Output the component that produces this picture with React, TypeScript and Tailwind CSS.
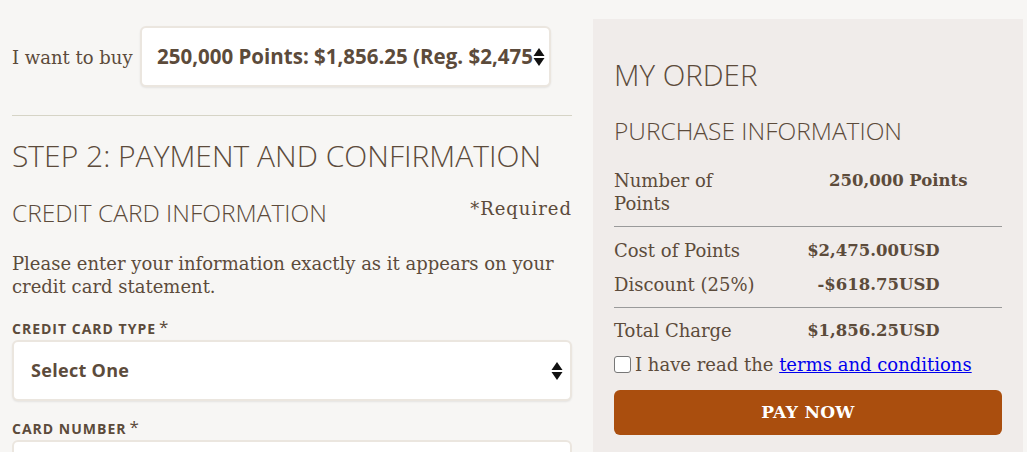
const serif = { fontFamily: '"DejaVu Serif", "Liberation Serif", serif' };

function Arrows() {
  return (
    <svg width="12" height="20" viewBox="0 0 12 20" className="shrink-0">
      <path d="M6 1 L11.5 9 L0.5 9 Z" fill="#111" />
      <path d="M6 19 L11.5 11 L0.5 11 Z" fill="#111" />
    </svg>
  );
}

export default function App() {
  return (
    <div className="w-[1027px] h-[452px] overflow-hidden bg-[#f7f6f4] text-[#5c4b3b] flex font-['Open_Sans',sans-serif]">
      {/* left column */}
      <div className="w-[560px] ml-[12px] shrink-0">
        <div className="flex items-center pt-[26px]">
          <span className="text-[18px] w-[128px] mt-[2px]" style={serif}>I want to buy</span>
          <div className="w-[411px] h-[61px] bg-white border-2 border-[#ebe6df] rounded-[6px] shadow-[0_1px_2px_rgba(0,0,0,0.08)] flex items-center pl-[15px] pr-[7px]">
            <span className="text-[20.5px] font-bold whitespace-nowrap flex-1">250,000 Points: $1,856.25 (Reg. $2,475</span>
            <Arrows />
          </div>
        </div>
        <div className="h-px bg-[#d6d4c6] mt-[28px]" />
        <h1 className="text-[30px] font-light leading-[36px] mt-[22px]">STEP 2: PAYMENT AND CONFIRMATION</h1>
        <div className="flex justify-between items-start mt-[24px]">
          <h2 className="text-[24.5px] font-light leading-[30px]">CREDIT CARD INFORMATION</h2>
          <span className="text-[18px] leading-[24px] -mt-[1px] tracking-[1px]" style={serif}>*Required</span>
        </div>
        <p className="text-[18px] leading-[23px] mt-[24px]" style={serif}>
          Please enter your information exactly as it appears on your credit card statement.
        </p>
        <div className="mt-[23px] text-[14px] font-bold tracking-[1px] leading-[16px] flex">
          CREDIT CARD TYPE<span className="ml-[3px] text-[17px] leading-[12px] font-normal">*</span>
        </div>
        <div className="mt-[3px] h-[61px] bg-white border-2 border-[#ebe6df] rounded-[6px] shadow-[0_1px_2px_rgba(0,0,0,0.08)] flex items-center pl-[17px] pr-[7px]">
          <span className="text-[18px] font-bold flex-1 tracking-[0.3px]">Select One</span>
          <Arrows />
        </div>
        <div className="mt-[20px] text-[14px] font-bold tracking-[1px] leading-[16px] flex">
          CARD NUMBER<span className="ml-[3px] text-[17px] leading-[12px] font-normal">*</span>
        </div>
        <div className="mt-[3px] h-[61px] bg-white border-2 border-[#ebe6df] rounded-[6px]" />
      </div>

      {/* right panel */}
      <div className="ml-[21px] mt-[19px] w-[430px] bg-[#f0ecea] pl-[21px] pr-[21px] pt-[38px]">
        <h2 className="text-[29.5px] font-light leading-[36px]">MY ORDER</h2>
        <h3 className="text-[24.5px] font-light leading-[30px] mt-[23px]">PURCHASE INFORMATION</h3>
        <div className="mt-[23px]" style={serif}>
          <div className="grid grid-cols-[186px_99px_1fr] text-[18px] leading-[23px] pb-[11px] border-b border-[#9a9a9a]">
            <span>Number of<br />Points</span>
            <span className="col-span-2 pl-[29px] font-bold text-[16.5px]">250,000 Points</span>
          </div>
          <div className="grid grid-cols-[186px_99px_1fr] text-[18px] leading-[23px] pt-[12px] gap-y-[11px] pb-[11px] border-b border-[#9a9a9a]">
            <span>Cost of Points</span>
            <span className="text-right font-bold text-[16.5px]">$2,475.00</span>
            <span className="font-bold text-[16.5px]">USD</span>
            <span>Discount (25%)</span>
            <span className="text-right font-bold text-[16.5px]">-$618.75</span>
            <span className="font-bold text-[16.5px]">USD</span>
          </div>
          <div className="grid grid-cols-[186px_99px_1fr] text-[18px] leading-[23px] pt-[11px]">
            <span>Total Charge</span>
            <span className="text-right font-bold text-[16.5px]">$1,856.25</span>
            <span className="font-bold text-[16.5px]">USD</span>
          </div>
          <label className="flex items-center text-[18px] leading-[23px] mt-[11px]">
            <input type="checkbox" className="w-[17px] h-[17px] mr-[4px] appearance-none bg-white border border-[#777] rounded-[3px]" />
            I have read the&nbsp;<a href="#" className="text-[#0000ee] underline">terms and conditions</a>
          </label>
          <button className="mt-[14px] w-full h-[45px] rounded-[6px] bg-[#aa4e0e] text-white font-bold text-[17px] tracking-[0.3px]">
            PAY NOW
          </button>
        </div>
      </div>
    </div>
  );
}
